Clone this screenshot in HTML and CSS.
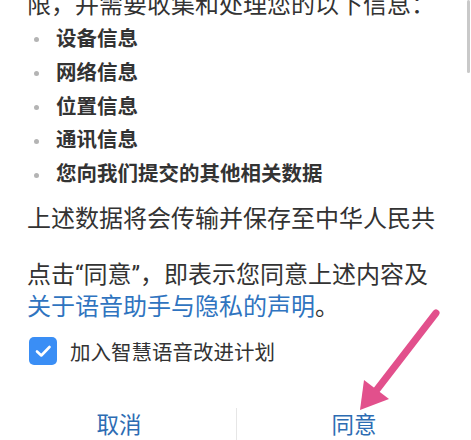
FILE: index.html
```html
<!DOCTYPE html>
<html lang="zh-CN">
<head>
<meta charset="utf-8">
<link rel="stylesheet" href="styles.css">
</head>
<body>
<div class="dialog">
  <div class="scroll">
    <div class="scroll-content">
      <p class="para first">限，并需要收集和处理您的以下信息：</p>
      <ul class="info-list">
        <li>设备信息</li>
        <li>网络信息</li>
        <li>位置信息</li>
        <li>通讯信息</li>
        <li>您向我们提交的其他相关数据</li>
      </ul>
      <p class="para transfer">上述数据将会传输并保存至中华人民共</p>
    </div>
    <div class="scrollbar"></div>
  </div>
  <p class="para statement">点击“同意”，即表示您同意上述内容及<br><a class="link">关于语音助手与隐私的声明</a>。</p>
  <label class="check-row">
    <span class="checkbox">
      <svg width="28" height="28" viewBox="0 0 28 28"><path d="M8 14.5 L12.3 18.5 L20.5 10" fill="none" stroke="#fff" stroke-width="2.6" stroke-linecap="round" stroke-linejoin="round"/></svg>
    </span>
    <span class="check-label">加入智慧语音改进计划</span>
  </label>
  <div class="buttons">
    <button class="btn">取消</button>
    <span class="divider"></span>
    <button class="btn">同意</button>
  </div>
</div>
<svg class="arrow" width="471" height="440" viewBox="0 0 471 440">
  <line x1="436" y1="313" x2="372" y2="396" stroke="#e2508c" stroke-width="7" stroke-linecap="round"/>
  <polygon points="360,410 364,380 389,399" fill="#e2508c"/>
</svg>
</body>
</html>
```
FILE: styles.css
```css
html, body {
  margin: 0;
  padding: 0;
  background: #ffffff;
}
body {
  width: 471px;
  height: 440px;
  overflow: hidden;
  position: relative;
  font-family: "Roboto", "Noto Sans CJK SC", sans-serif;
  color: #333333;
}
.dialog {
  display: flex;
  flex-direction: column;
}
.scroll {
  position: relative;
  height: 238px;
  overflow: hidden;
}
.scroll-content {
  padding: 0 35px 0 27px;
}
.para {
  margin: 0;
  font-size: 24px;
  line-height: 34px;
}
.first {
  margin-top: -12px;
  white-space: nowrap;
}
.info-list {
  list-style: none;
  margin: 1px 0 0;
  padding: 0;
}
.info-list li {
  display: flex;
  align-items: center;
  font-size: 20.5px;
  line-height: 33.8px;
  font-weight: bold;
  color: #333333;
}
.info-list li::before {
  content: "";
  width: 5px;
  height: 5px;
  border-radius: 50%;
  background: #b4b4b4;
  margin: 0 17px 0 7px;
  flex: none;
}
.transfer {
  margin-top: 10px;
  white-space: nowrap;
}
.scrollbar {
  position: absolute;
  right: 1px;
  top: 0;
  width: 3px;
  height: 73px;
  border-radius: 2px;
  background: #c9c9c9;
}
.statement {
  margin-top: 21px;
  padding-left: 27px;
  line-height: 32px;
  white-space: nowrap;
}
.link {
  color: #2f74c0;
  text-decoration: none;
}
.check-row {
  display: flex;
  align-items: center;
  margin-top: 14px;
  padding-left: 29px;
  height: 28px;
}
.checkbox {
  width: 28px;
  height: 28px;
  border-radius: 5px;
  background: #3a8ef5;
  display: flex;
  flex: none;
}
.check-label {
  margin-left: 13px;
  font-size: 20.5px;
  color: #333333;
}
.buttons {
  display: flex;
  align-items: stretch;
  margin-top: 40px;
  height: 40px;
}
.btn {
  flex: 1;
  border: none;
  background: transparent;
  padding: 0;
  font-family: "Roboto", "Noto Sans CJK SC", sans-serif;
  font-size: 22.5px;
  color: #2d6cb3;
  line-height: 40px;
}
.btn:first-child {
  padding-left: 2px;
}
.divider {
  width: 1px;
  margin-top: 3px;
  background: #e6e6e6;
  flex: none;
}
.arrow {
  position: absolute;
  left: 0;
  top: 0;
  pointer-events: none;
}
```
